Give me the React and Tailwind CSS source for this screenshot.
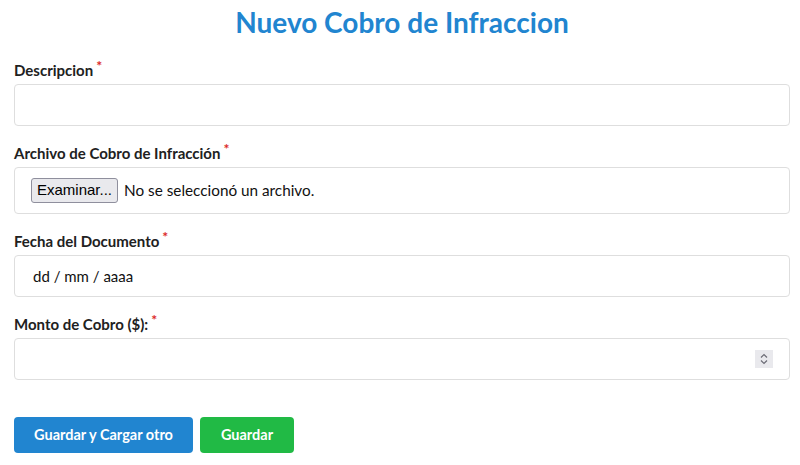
import React from "react";

const Req = () => <span className="text-[#db2828] text-[14px] leading-none relative -top-[5px] ml-[3px]">*</span>;

function Field({ label, children, className = "" }) {
  return (
    <div className={"mb-[17px] " + className}>
      <label className="block text-[15px] font-bold leading-[20px] h-[20px] mb-[4px] text-[#212121]">
        {label}
        <Req />
      </label>
      {children}
    </div>
  );
}

export default function App() {
  const box = "w-full border border-[#dedede] rounded-[4px] bg-white";
  return (
    <div className="w-[800px] h-[465px] bg-white pl-[14px] pr-[10px] overflow-hidden" style={{ fontFamily: "Lato, 'Noto Sans', sans-serif" }}>
      <h1 className="text-center text-[28px] font-bold text-[#2185d0] leading-[44px] mb-[16px]">
        Nuevo Cobro de Infraccion
      </h1>

      <Field label="Descripcion">
        <div className={box + " h-[42px]"} />
      </Field>

      <Field label="Archivo de Cobro de Infracción">
        <div className={box + " h-[47px] flex items-center pl-[16px]"}>
          <span
            className="h-[25px] px-[5px] flex items-center border border-[#8f8f9d] rounded-[3px] bg-[#e9e9ed] text-[15px] text-black"
            style={{ fontFamily: "'Liberation Sans', Arial, sans-serif" }}
          >
            Examinar...
          </span>
          <span className="ml-[6px] text-[15.3px] text-[#111]">No se seleccionó un archivo.</span>
        </div>
      </Field>

      <Field label="Fecha del Documento">
        <div className={box + " h-[42px] flex items-center pl-[18px] text-[15px] text-[#111]"}>
          dd / mm / aaaa
        </div>
      </Field>

      <Field label="Monto de Cobro ($):">
        <div className={box + " h-[42px] flex items-center justify-end pr-[16px]"}>
          <div className="w-[18px] h-[18px] bg-[#e9e9ed] flex items-center justify-center">
            <svg width="10" height="14" viewBox="0 0 10 14" fill="none" stroke="#6b6b75" strokeWidth="1.2">
              <path d="M2 5.5 L5 2.5 L8 5.5" />
              <path d="M2 8.5 L5 11.5 L8 8.5" />
            </svg>
          </div>
        </div>
      </Field>

      <div className="flex gap-[7px] pt-[20px]">
        <button className="h-[36px] w-[179px] rounded-[4px] bg-[#2185d0] text-white text-[14.5px] font-bold">
          Guardar y Cargar otro
        </button>
        <button className="h-[36px] w-[94px] rounded-[4px] bg-[#21ba45] text-white text-[14.5px] font-bold">
          Guardar
        </button>
      </div>
    </div>
  );
}
